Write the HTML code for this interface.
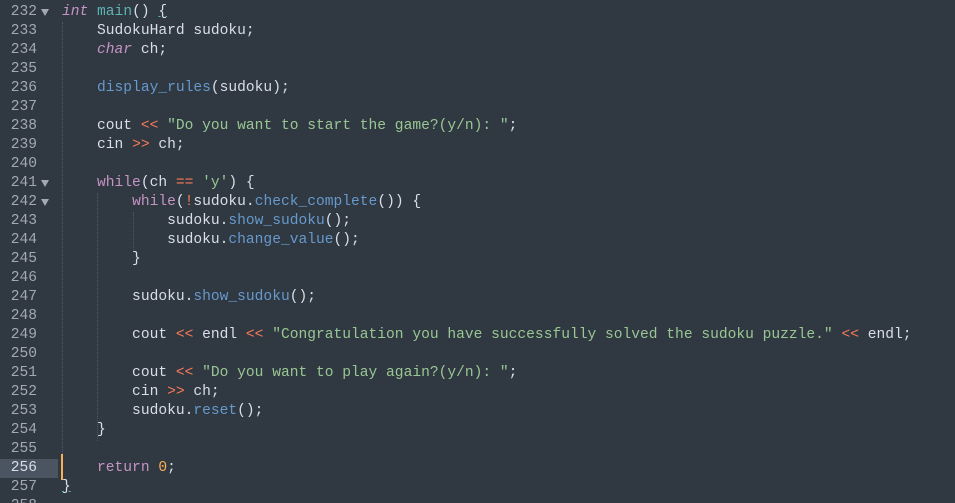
<!DOCTYPE html>
<html><head><meta charset="utf-8"><style>
html,body{margin:0;padding:0;background:#303841;width:955px;height:503px;overflow:hidden}
body{position:relative;font-family:"Liberation Mono","DejaVu Sans Mono",monospace;font-size:14.6px;color:#d8dee9}
#w{position:absolute;left:0;top:2px;width:955px;height:503px}
.l{position:absolute;left:0;height:19px;line-height:19px;white-space:pre;width:955px}
.n{position:absolute;left:0;width:37px;text-align:right;color:#a3a9b3}
.c{position:absolute;left:62px}
.k{color:#c594c5;font-style:italic}
.kw{color:#c594c5}
.f{color:#6699cc}
.m{color:#5fb3b3}
.s{color:#99c794}
.o{color:#f97b58}
.num{color:#f9ae58}
.ar{position:absolute;left:41px;top:6px;width:0;height:0;border-left:4.5px solid transparent;border-right:4.5px solid transparent;border-top:7px solid #a3a9b3}
.g{position:absolute;border-left:1px dotted #4e5865;width:0}
</style></head><body><div id="w">
<div style="position:absolute;left:0;top:457px;width:58px;height:19px;background:#4b5561"></div>
<div style="position:absolute;left:61px;top:452px;width:2px;height:26px;background:#f9ae58"></div>
<div class="g" style="left:62px;top:20px;height:432px"></div>
<div class="g" style="left:97px;top:191px;height:248px"></div>
<div class="g" style="left:133px;top:210px;height:38px"></div>

<div class="l" style="top:1px"><span class="n">232</span><span class="ar"></span><span class="c"><span class="k">int</span> <span class="m">main</span>() <span style="text-decoration:underline;text-decoration-color:#5fb3b3">{</span></span></div>
<div class="l" style="top:20px"><span class="n">233</span><span class="c">    SudokuHard sudoku;</span></div>
<div class="l" style="top:39px"><span class="n">234</span><span class="c">    <span class="k">char</span> ch;</span></div>
<div class="l" style="top:58px"><span class="n">235</span></div>
<div class="l" style="top:77px"><span class="n">236</span><span class="c">    <span class="f">display_rules</span>(sudoku);</span></div>
<div class="l" style="top:96px"><span class="n">237</span></div>
<div class="l" style="top:115px"><span class="n">238</span><span class="c">    cout <span class="o">&lt;&lt;</span> <span class="s">"Do you want to start the game?(y/n): "</span>;</span></div>
<div class="l" style="top:134px"><span class="n">239</span><span class="c">    cin <span class="o">&gt;&gt;</span> ch;</span></div>
<div class="l" style="top:153px"><span class="n">240</span></div>
<div class="l" style="top:172px"><span class="n">241</span><span class="ar"></span><span class="c">    <span class="kw">while</span>(ch <span class="o">==</span> <span class="s">'y'</span>) {</span></div>
<div class="l" style="top:191px"><span class="n">242</span><span class="ar"></span><span class="c">        <span class="kw">while</span>(<span class="o">!</span>sudoku.<span class="f">check_complete</span>()) {</span></div>
<div class="l" style="top:210px"><span class="n">243</span><span class="c">            sudoku.<span class="f">show_sudoku</span>();</span></div>
<div class="l" style="top:229px"><span class="n">244</span><span class="c">            sudoku.<span class="f">change_value</span>();</span></div>
<div class="l" style="top:248px"><span class="n">245</span><span class="c">        }</span></div>
<div class="l" style="top:267px"><span class="n">246</span></div>
<div class="l" style="top:286px"><span class="n">247</span><span class="c">        sudoku.<span class="f">show_sudoku</span>();</span></div>
<div class="l" style="top:305px"><span class="n">248</span></div>
<div class="l" style="top:324px"><span class="n">249</span><span class="c">        cout <span class="o">&lt;&lt;</span> endl <span class="o">&lt;&lt;</span> <span class="s">"Congratulation you have successfully solved the sudoku puzzle."</span> <span class="o">&lt;&lt;</span> endl;</span></div>
<div class="l" style="top:343px"><span class="n">250</span></div>
<div class="l" style="top:362px"><span class="n">251</span><span class="c">        cout <span class="o">&lt;&lt;</span> <span class="s">"Do you want to play again?(y/n): "</span>;</span></div>
<div class="l" style="top:381px"><span class="n">252</span><span class="c">        cin <span class="o">&gt;&gt;</span> ch;</span></div>
<div class="l" style="top:400px"><span class="n">253</span><span class="c">        sudoku.<span class="f">reset</span>();</span></div>
<div class="l" style="top:419px"><span class="n">254</span><span class="c">    }</span></div>
<div class="l" style="top:438px"><span class="n">255</span></div>
<div class="l" style="top:457px"><span class="n" style="color:#d8dee9">256</span><span class="c">    <span class="kw">return</span> <span class="num">0</span>;</span></div>
<div class="l" style="top:476px"><span class="n">257</span><span class="c"><span style="text-decoration:underline;text-decoration-color:#5fb3b3">}</span></span></div>
<div class="l" style="top:495px"><span class="n">258</span></div>
</div></body></html>
